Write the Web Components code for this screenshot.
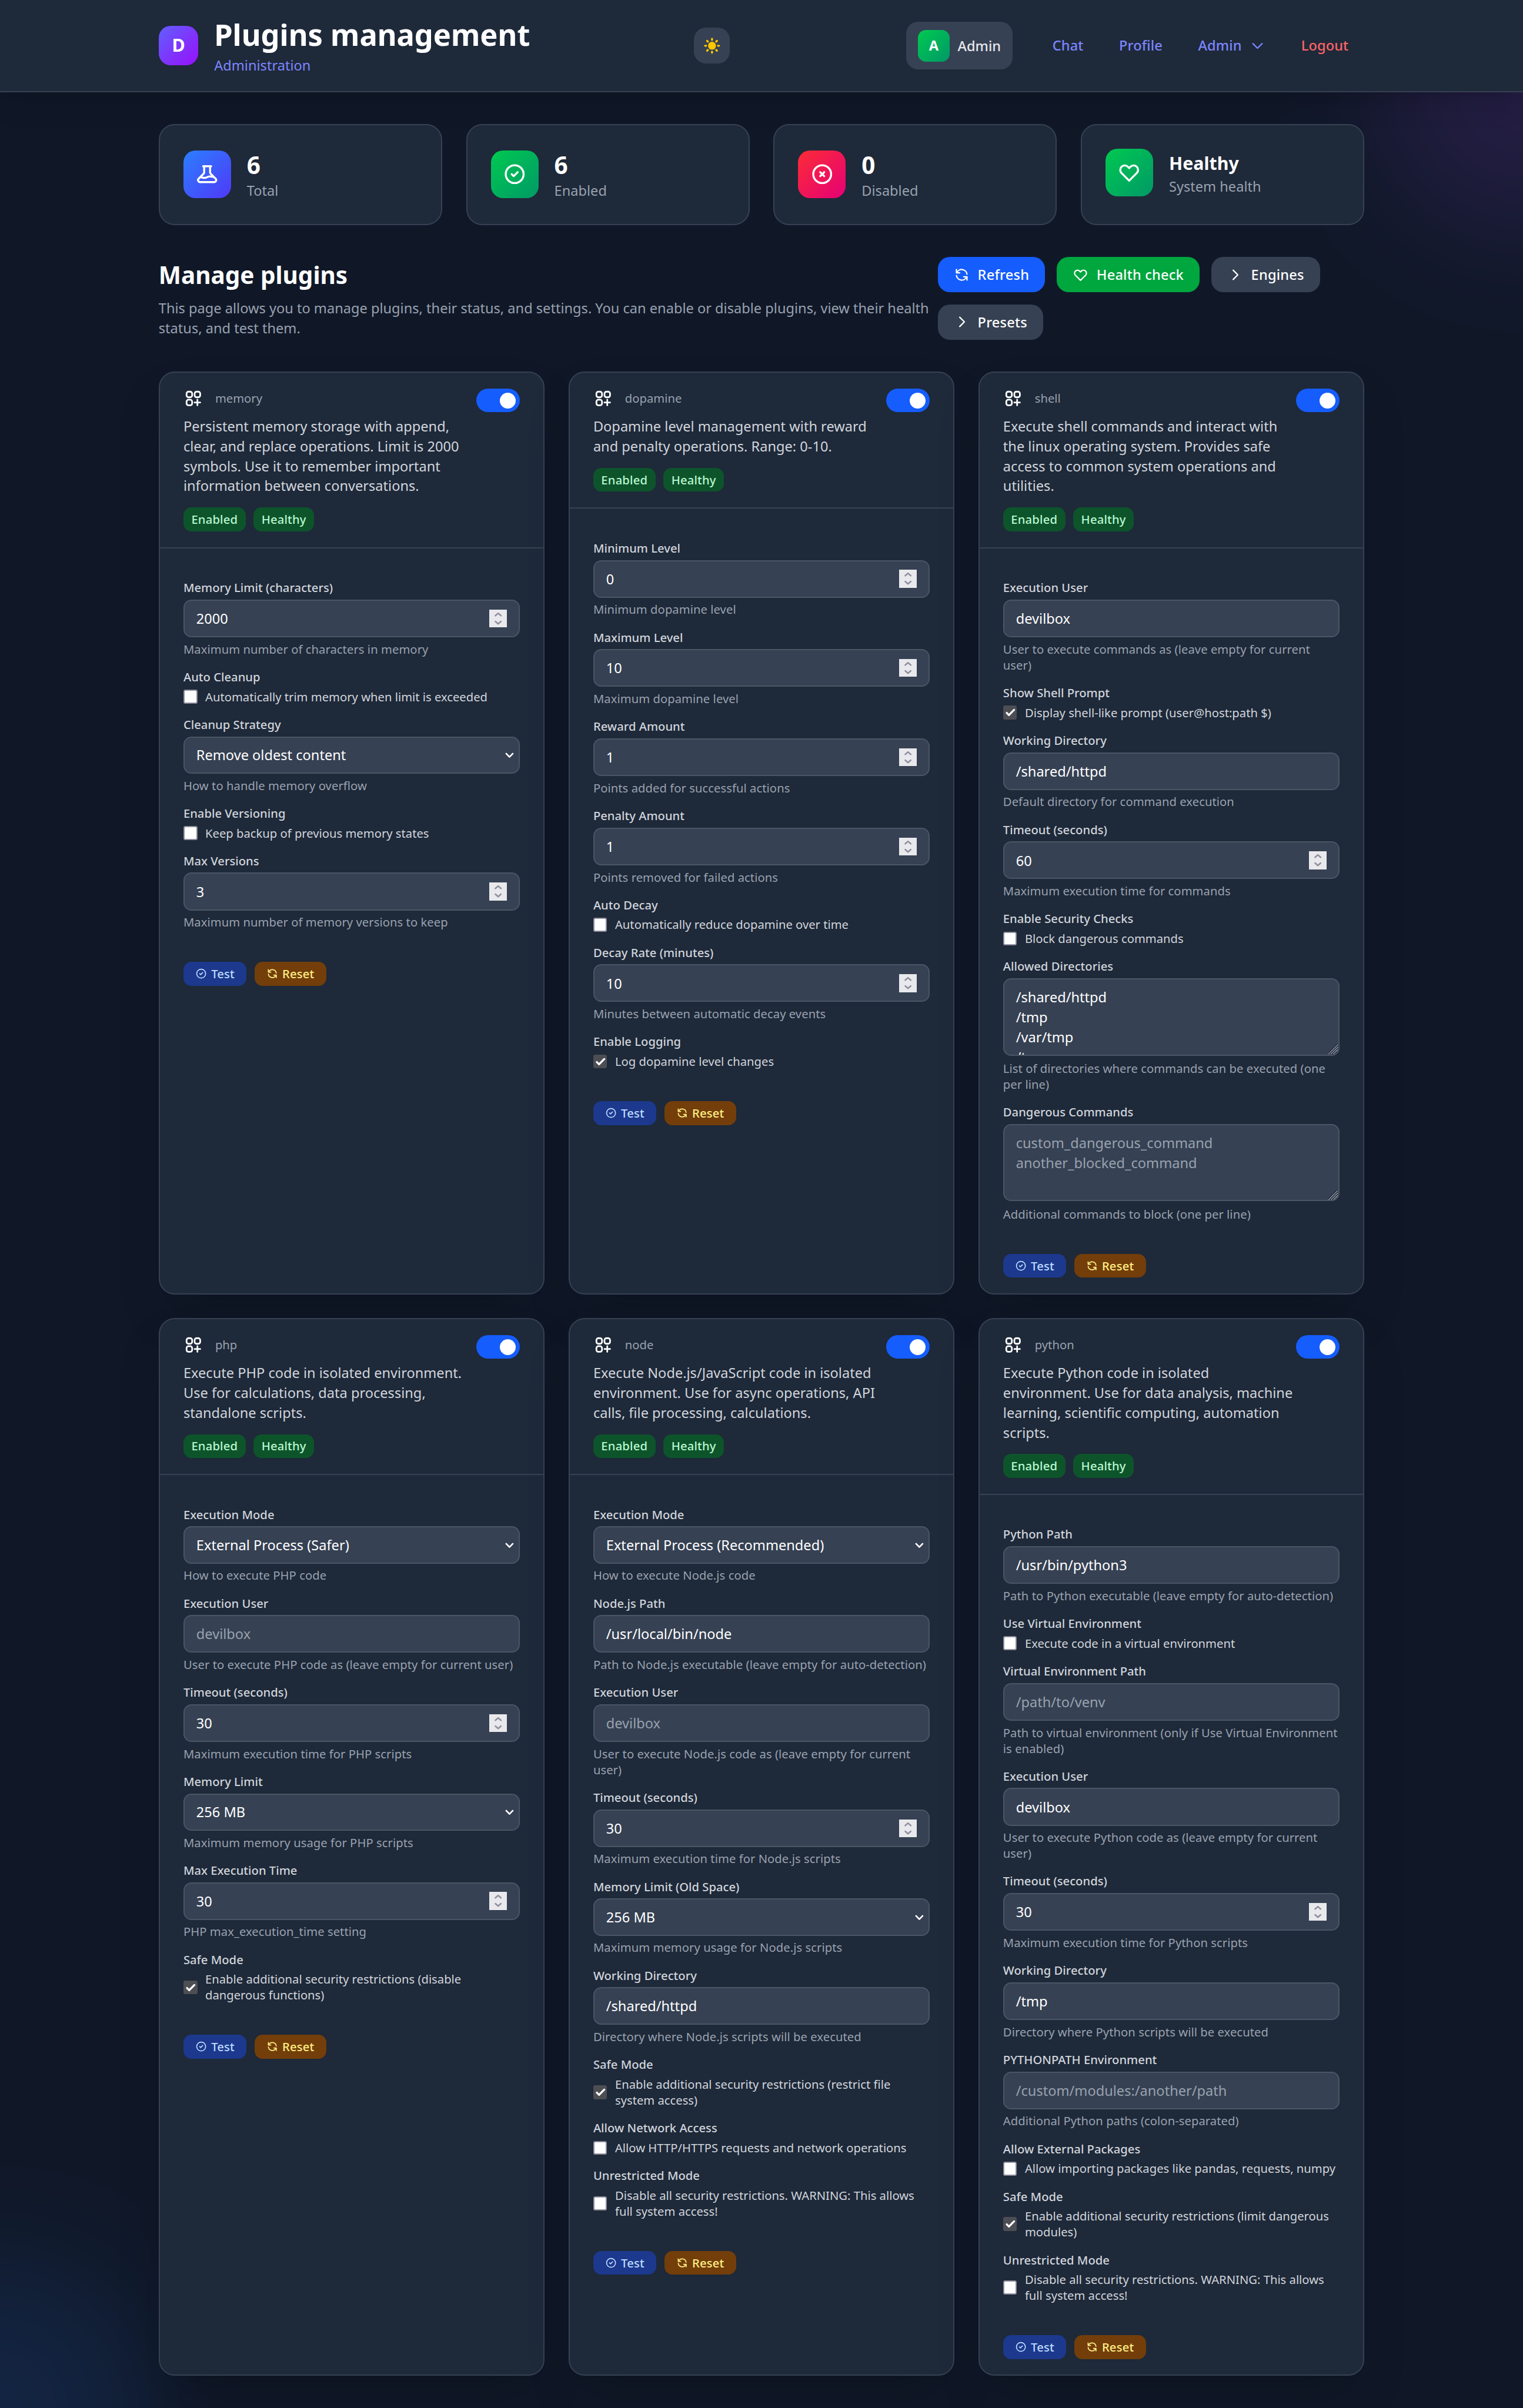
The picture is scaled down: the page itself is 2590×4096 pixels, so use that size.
<!DOCTYPE html>
<html lang="en">
<head>
<meta charset="utf-8">
<title>Plugins management</title>
<style>
html{margin:0;background:#101828}
body{margin:0;zoom:1.686198;width:1536px;height:2429px;overflow:hidden;font-family:"Noto Sans",sans-serif;font-size:16px;line-height:24px;color:#fff;background:#101828}
</style>
</head>
<body>
<plugins-page>
  <page-header slot="header" heading="Plugins management" subtitle="Administration" logo="D" user="Admin" initial="A">
    <nav-link>Chat</nav-link>
    <nav-link>Profile</nav-link>
    <nav-link menu>Admin</nav-link>
    <nav-link danger>Logout</nav-link>
  </page-header>
  <stat-card slot="stats" icon="flask" tone="blue" value="6">Total</stat-card>
  <stat-card slot="stats" icon="check" tone="green" value="6">Enabled</stat-card>
  <stat-card slot="stats" icon="cross" tone="red" value="0">Disabled</stat-card>
  <stat-card slot="stats" icon="heart" tone="green" value="Healthy" compact>System health</stat-card>
  <span slot="heading">Manage plugins</span>
  <span slot="intro">This page allows you to manage plugins, their status, and settings. You can enable or disable plugins, view their health status, and test them.</span>
  <action-button slot="actions" icon="refresh" tone="blue">Refresh</action-button>
  <action-button slot="actions" icon="heart" tone="green">Health check</action-button>
  <action-button slot="actions" icon="right" tone="gray">Engines</action-button>
  <action-button slot="actions" icon="right" tone="gray">Presets</action-button>

  <plugin-card name="memory">
    <span slot="description">Persistent memory storage with append, clear, and replace operations. Limit is 2000 symbols. Use it to remember important information between conversations.</span>
    <form-field type="number" label="Memory Limit (characters)" value="2000" help="Maximum number of characters in memory"></form-field>
    <form-field type="checkbox" label="Auto Cleanup" value="Automatically trim memory when limit is exceeded"></form-field>
    <form-field type="select" label="Cleanup Strategy" value="Remove oldest content" help="How to handle memory overflow"></form-field>
    <form-field type="checkbox" label="Enable Versioning" value="Keep backup of previous memory states"></form-field>
    <form-field type="number" label="Max Versions" value="3" help="Maximum number of memory versions to keep"></form-field>
  </plugin-card>

  <plugin-card name="dopamine">
    <span slot="description">Dopamine level management with reward and penalty operations. Range: 0-10.</span>
    <form-field type="number" label="Minimum Level" value="0" help="Minimum dopamine level"></form-field>
    <form-field type="number" label="Maximum Level" value="10" help="Maximum dopamine level"></form-field>
    <form-field type="number" label="Reward Amount" value="1" help="Points added for successful actions"></form-field>
    <form-field type="number" label="Penalty Amount" value="1" help="Points removed for failed actions"></form-field>
    <form-field type="checkbox" label="Auto Decay" value="Automatically reduce dopamine over time"></form-field>
    <form-field type="number" label="Decay Rate (minutes)" value="10" help="Minutes between automatic decay events"></form-field>
    <form-field type="checkbox" checked label="Enable Logging" value="Log dopamine level changes"></form-field>
  </plugin-card>

  <plugin-card name="shell">
    <span slot="description">Execute shell commands and interact with the linux operating system. Provides safe access to common system operations and utilities.</span>
    <form-field type="text" label="Execution User" value="devilbox" help="User to execute commands as (leave empty for current user)"></form-field>
    <form-field type="checkbox" checked label="Show Shell Prompt" value="Display shell-like prompt (user@host:path $)"></form-field>
    <form-field type="text" label="Working Directory" value="/shared/httpd" help="Default directory for command execution"></form-field>
    <form-field type="number" label="Timeout (seconds)" value="60" help="Maximum execution time for commands"></form-field>
    <form-field type="checkbox" label="Enable Security Checks" value="Block dangerous commands"></form-field>
    <form-field type="textarea" label="Allowed Directories" value="/shared/httpd&#10;/tmp&#10;/var/tmp&#10;/tmp" help="List of directories where commands can be executed (one per line)"></form-field>
    <form-field type="textarea" placeholder label="Dangerous Commands" value="custom_dangerous_command&#10;another_blocked_command" help="Additional commands to block (one per line)"></form-field>
  </plugin-card>

  <plugin-card name="php">
    <span slot="description">Execute PHP code in isolated environment. Use for calculations, data processing, standalone scripts.</span>
    <form-field type="select" label="Execution Mode" value="External Process (Safer)" help="How to execute PHP code"></form-field>
    <form-field type="text" placeholder label="Execution User" value="devilbox" help="User to execute PHP code as (leave empty for current user)"></form-field>
    <form-field type="number" label="Timeout (seconds)" value="30" help="Maximum execution time for PHP scripts"></form-field>
    <form-field type="select" label="Memory Limit" value="256 MB" help="Maximum memory usage for PHP scripts"></form-field>
    <form-field type="number" label="Max Execution Time" value="30" help="PHP max_execution_time setting"></form-field>
    <form-field type="checkbox" checked label="Safe Mode" value="Enable additional security restrictions (disable dangerous functions)"></form-field>
  </plugin-card>

  <plugin-card name="node">
    <span slot="description">Execute Node.js/JavaScript code in isolated environment. Use for async operations, API calls, file processing, calculations.</span>
    <form-field type="select" label="Execution Mode" value="External Process (Recommended)" help="How to execute Node.js code"></form-field>
    <form-field type="text" label="Node.js Path" value="/usr/local/bin/node" help="Path to Node.js executable (leave empty for auto-detection)"></form-field>
    <form-field type="text" placeholder label="Execution User" value="devilbox" help="User to execute Node.js code as (leave empty for current user)"></form-field>
    <form-field type="number" label="Timeout (seconds)" value="30" help="Maximum execution time for Node.js scripts"></form-field>
    <form-field type="select" label="Memory Limit (Old Space)" value="256 MB" help="Maximum memory usage for Node.js scripts"></form-field>
    <form-field type="text" label="Working Directory" value="/shared/httpd" help="Directory where Node.js scripts will be executed"></form-field>
    <form-field type="checkbox" checked label="Safe Mode" value="Enable additional security restrictions (restrict file system access)"></form-field>
    <form-field type="checkbox" label="Allow Network Access" value="Allow HTTP/HTTPS requests and network operations"></form-field>
    <form-field type="checkbox" label="Unrestricted Mode" value="Disable all security restrictions. WARNING: This allows full system access!"></form-field>
  </plugin-card>

  <plugin-card name="python">
    <span slot="description">Execute Python code in isolated environment. Use for data analysis, machine learning, scientific computing, automation scripts.</span>
    <form-field type="text" label="Python Path" value="/usr/bin/python3" help="Path to Python executable (leave empty for auto-detection)"></form-field>
    <form-field type="checkbox" label="Use Virtual Environment" value="Execute code in a virtual environment"></form-field>
    <form-field type="text" placeholder label="Virtual Environment Path" value="/path/to/venv" help="Path to virtual environment (only if Use Virtual Environment is enabled)"></form-field>
    <form-field type="text" label="Execution User" value="devilbox" help="User to execute Python code as (leave empty for current user)"></form-field>
    <form-field type="number" label="Timeout (seconds)" value="30" help="Maximum execution time for Python scripts"></form-field>
    <form-field type="text" label="Working Directory" value="/tmp" help="Directory where Python scripts will be executed"></form-field>
    <form-field type="text" placeholder label="PYTHONPATH Environment" value="/custom/modules:/another/path" help="Additional Python paths (colon-separated)"></form-field>
    <form-field type="checkbox" label="Allow External Packages" value="Allow importing packages like pandas, requests, numpy"></form-field>
    <form-field type="checkbox" checked label="Safe Mode" value="Enable additional security restrictions (limit dangerous modules)"></form-field>
    <form-field type="checkbox" label="Unrestricted Mode" value="Disable all security restrictions. WARNING: This allows full system access!"></form-field>
  </plugin-card>
</plugins-page>

<script>
const define = (name, render) => customElements.define(name, class extends HTMLElement {
  connectedCallback() {
    if (this.shadowRoot) return;
    this.attachShadow({ mode: 'open' }).innerHTML = '<style>*{box-sizing:border-box}</style>' + render(this);
  }
});
const esc = s => (s || '').replace(/&/g, '&amp;').replace(/</g, '&lt;');

const ICONS = {
  flask: 'M19.428 15.428a2 2 0 00-1.022-.547l-2.387-.477a6 6 0 00-3.86.517l-.318.158a6 6 0 01-3.86.517L6.05 15.21a2 2 0 00-1.806.547M8 4h8l-1 1v5.172a2 2 0 00.586 1.414l5 5c1.26 1.26.367 3.414-1.415 3.414H4.828c-1.782 0-2.674-2.154-1.414-3.414l5-5A2 2 0 009 10.172V5L8 4z',
  check: 'M9 12l2 2 4-4m6 2a9 9 0 11-18 0 9 9 0 0118 0z',
  cross: 'M10 14l2-2m0 0l2-2m-2 2l-2-2m2 2l2 2m7-2a9 9 0 11-18 0 9 9 0 0118 0z',
  heart: 'M4.318 6.318a4.5 4.5 0 000 6.364L12 20.364l7.682-7.682a4.5 4.5 0 00-6.364-6.364L12 7.636l-1.318-1.318a4.5 4.5 0 00-6.364 0z',
  refresh: 'M4 4v5h.582m15.356 2A8.001 8.001 0 004.582 9m0 0H9m11 11v-5h-.581m0 0a8.003 8.003 0 01-15.357-2m15.357 2H15',
  right: 'M9 5l7 7-7 7',
  down: 'M19 9l-7 7-7-7',
  plugin: 'M13.5 16.875h3.375m0 0h3.375m-3.375 0V13.5m0 3.375v3.375M6 10.5h2.25a2.25 2.25 0 002.25-2.25V6a2.25 2.25 0 00-2.25-2.25H6A2.25 2.25 0 003.75 6v2.25A2.25 2.25 0 006 10.5zm0 9.75h2.25A2.25 2.25 0 0010.5 18v-2.25a2.25 2.25 0 00-2.25-2.25H6a2.25 2.25 0 00-2.25 2.25V18A2.25 2.25 0 006 20.25zm9.75-9.75H18a2.25 2.25 0 002.25-2.25V6A2.25 2.25 0 0018 3.75h-2.25A2.25 2.25 0 0013.5 6v2.25a2.25 2.25 0 002.25 2.25z'
};

define('ui-icon', el => {
  const size = el.getAttribute('size') || 24;
  return `<style>:host{display:block;flex:none;width:${size}px;height:${size}px}svg{display:block;width:100%;height:100%}</style>
  <svg viewBox="0 0 24 24" fill="none" stroke="currentColor" stroke-width="2" stroke-linecap="round" stroke-linejoin="round"><path d="${ICONS[el.getAttribute('name')]}"/></svg>`;
});

define('nav-link', el => `<style>
  :host{display:flex;align-items:center;gap:8px;padding:8px 16px;font-size:14px;line-height:20px;font-weight:500;letter-spacing:.06px;color:#7c86ff}
  :host([danger]){color:#ff6467}
  </style><slot></slot>${el.hasAttribute('menu') ? '<ui-icon name="down" size="16"></ui-icon>' : ''}`);

define('page-header', el => `<style>
  :host{display:block;position:relative;background:#1e2939;border-bottom:1.2px solid #364153;box-shadow:0 20px 25px -5px rgb(0 0 0/.1),0 8px 10px -6px rgb(0 0 0/.1)}
  .bar{width:1216px;height:92px;margin:0 auto;display:flex;align-items:center}
  .brand{display:flex;align-items:center;gap:16px;width:540px}
  .logo{width:40px;height:40px;border-radius:12px;background:linear-gradient(135deg,#615fff,#9810fa);display:flex;align-items:center;justify-content:center;font-size:18px;font-weight:700}
  h1{margin:0;padding-top:1.6px;font-size:30px;line-height:36px;font-weight:700}
  p{margin:3.4px 0 0;font-size:14px;line-height:20px;color:#7c86ff}
  .theme{width:36px;height:36px;border-radius:12px;background:#364153;color:#fdc700;display:flex;align-items:center;justify-content:center}
  .theme svg{width:20px;height:20px}
  nav{margin-left:auto;display:flex;align-items:center;gap:4px}
  .user{display:flex;align-items:center;gap:8px;height:48px;padding:0 12px;margin-right:20px;border-radius:12px;background:#364153;font-size:14px;font-weight:500;color:#e5e7eb}
  .user span{padding-top:.8px}
  .avatar{width:32px;height:32px;border-radius:8px;background:linear-gradient(135deg,#00c951,#009966);color:#fff;font-weight:700;display:flex;align-items:center;justify-content:center}
  </style>
  <div class="bar">
    <div class="brand"><div class="logo">${el.getAttribute('logo')}</div><div><h1>${el.getAttribute('heading')}</h1><p>${el.getAttribute('subtitle')}</p></div></div>
    <div class="theme"><svg viewBox="0 0 20 20" fill="currentColor"><path fill-rule="evenodd" clip-rule="evenodd" d="M10 2a1 1 0 011 1v1a1 1 0 11-2 0V3a1 1 0 011-1zm4 8a4 4 0 11-8 0 4 4 0 018 0zm-.464 4.95l.707.707a1 1 0 001.414-1.414l-.707-.707a1 1 0 00-1.414 1.414zm2.12-10.607a1 1 0 010 1.414l-.706.707a1 1 0 11-1.414-1.414l.707-.707a1 1 0 011.414 0zM17 11a1 1 0 100-2h-1a1 1 0 100 2h1zm-7 4a1 1 0 011 1v1a1 1 0 11-2 0v-1a1 1 0 011-1zM5.05 6.464A1 1 0 106.465 5.05l-.708-.707a1 1 0 00-1.414 1.414l.707.707zm1.414 8.486l-.707.707a1 1 0 01-1.414-1.414l.707-.707a1 1 0 011.414 1.414zM4 11a1 1 0 100-2H3a1 1 0 000 2h1z"/></svg></div>
    <nav><div class="user"><div class="avatar">${el.getAttribute('initial')}</div><span>${el.getAttribute('user')}</span></div><slot></slot></nav>
  </div>`);

define('stat-card', el => `<style>
  :host{display:flex;align-items:flex-start;gap:16px;height:102px;padding:23.8px;border:1.2px solid #364153;border-radius:16px;background:#1e2939;box-sizing:border-box}
  .tile{width:48px;height:48px;margin-top:2px;border-radius:12px;display:flex;align-items:center;justify-content:center}
  :host([compact]) .tile{margin-top:0}
  .blue{background:linear-gradient(135deg,#2b7fff,#4f39f6)}
  .green{background:linear-gradient(135deg,#00c951,#009966)}
  .red{background:linear-gradient(135deg,#fb2c36,#e60076)}
  .value{padding-top:.6px;font-size:24px;line-height:32px;font-weight:700}
  :host([compact]) .value{font-size:18px;line-height:28px}
  .label{font-size:14px;line-height:20px;color:#99a1af}
  </style>
  <div class="tile ${el.getAttribute('tone')}"><ui-icon name="${el.getAttribute('icon')}"></ui-icon></div>
  <div><div class="value">${el.getAttribute('value')}</div><div class="label"><slot></slot></div></div>`);

define('action-button', el => `<style>
  :host{display:flex;align-items:center;gap:8px;height:36px;padding:0 16px;border-radius:12px;font-size:14px;line-height:20px;font-weight:500;letter-spacing:.12px;box-sizing:border-box}
  :host([tone=blue]){background:#155dfc}
  :host([tone=green]){background:#00a63e}
  :host([tone=gray]){background:#364153}
  :host([small]){height:24px;padding:0 12px;gap:4px;border-radius:8px;font-size:12px;line-height:16px}
  :host([tone=test]){background:#1c398e;color:#bedbff}
  :host([tone=reset]){background:#733e0a;color:#fff085}
  span{padding-top:.6px}
  </style><ui-icon name="${el.getAttribute('icon')}" size="${el.hasAttribute('small') ? 12 : 16}"></ui-icon><span><slot></slot></span>`);

define('status-badge', () => `<style>
  :host{display:block;height:24px;padding:4px 8px;border-radius:8px;background:#0d542b;color:#b9f8cf;font-size:12px;line-height:16px;font-weight:500;letter-spacing:.1px;box-sizing:border-box}
  </style><slot></slot>`);

define('toggle-switch', () => `<style>
  :host{display:flex;align-items:center;justify-content:flex-end;flex:none;width:44px;height:24px;padding:4px;border-radius:12px;background:#155dfc;box-sizing:border-box}
  i{width:16px;height:16px;border-radius:50%;background:#fff}
  </style><i></i>`);

const CONTROL = {
  text: v => `<div class="box">${v}</div>`,
  number: v => `<div class="box"><span>${v}</span><svg class="spin" viewBox="0 0 18 18" fill="none" stroke="#8f8f9d" stroke-width="1.5" stroke-linecap="round" stroke-linejoin="round"><path d="M6.2 6.1L9 3.6l2.8 2.5M6.2 11.9L9 14.4l2.8-2.5"/></svg></div>`,
  select: v => `<div class="box select"><span>${v}</span><svg class="arrow" viewBox="0 0 10 6" fill="none" stroke="#fff" stroke-width="1.6" stroke-linecap="round" stroke-linejoin="round"><path d="M1.7 1.1L5 4.5l3.3-3.4"/></svg></div>`,
  textarea: v => `<div class="box area">${v}<svg class="grip" viewBox="0 0 10 10" fill="none"><path d="M-.4 9.9L9.9-.4M2.1 9.9l7.8-7.8M4.6 9.9l5.3-5.3M7.1 9.9l2.8-2.8" stroke="#1b2433" stroke-width=".7"/><path d="M.6 10.1L10.1.6M3.1 10.1l7-7M5.6 10.1l4.5-4.5M8.1 10.1l2-2" stroke="#b4b8bf" stroke-width=".6"/></svg></div>`
};
define('form-field', el => {
  const type = el.getAttribute('type'), value = esc(el.getAttribute('value'));
  const body = type === 'checkbox'
    ? `<div class="row"><i class="tick">${el.hasAttribute('checked') ? '<svg viewBox="0 0 14 14" fill="none" stroke="#fff" stroke-width="2" stroke-linecap="round" stroke-linejoin="round"><path d="M3.6 7.5L5.8 9.7 11 4.4"/></svg>' : ''}</i><span>${value}</span></div>`
    : CONTROL[type](value) + `<div class="help">${esc(el.getAttribute('help'))}</div>`;
  return `<style>
  :host{display:block;font-size:12px;line-height:16px}
  .label{font-weight:500;color:#d1d5dc;margin-bottom:4px}
  .box{height:38px;padding:1.2px 11.8px 0;display:flex;align-items:center;justify-content:space-between;border:1.2px solid #4a5565;border-radius:8px;background:#364153;font-size:14px;line-height:20px;color:#fff}
  :host([placeholder]) .box{color:#99a1af}
  .select{height:37.5px;padding-right:4.5px}
  .area{position:relative;display:block;height:78px;padding:8.5px 11.8px 0;white-space:pre;overflow:hidden;margin-bottom:5px}
  .grip{position:absolute;right:.5px;bottom:.5px;width:10px;height:10px}
  .spin{width:18px;height:18px;margin-top:-1.2px;background:#e9e9ed}
  .arrow{width:10px;height:6px}
  .help{margin-top:4px;color:#99a1af;letter-spacing:.03px}
  .area + .help{margin-top:0}
  .row{display:flex;align-items:center;gap:8px;color:#d1d5dc}
  .tick{flex:none;width:14px;height:14px;border:1.2px solid #8f8f9d;border-radius:2px;background:#fff}
  :host([checked]) .tick{border:0;background:#4d4e53}
  .tick svg{display:block;width:14px;height:14px}
  </style><div class="label">${esc(el.getAttribute('label'))}</div>${body}`;
});

define('plugin-card', el => `<style>
  :host{display:block;border:1.2px solid #364153;border-radius:16px;background:#1e2939;box-shadow:0 25px 50px -12px rgb(0 0 0/.25);box-sizing:border-box}
  header{display:flex;align-items:flex-start;justify-content:space-between;padding:15.8px 23.8px 16px;border-bottom:1.2px solid #364153}
  .title{display:flex;align-items:center;gap:12px;height:20px;font-size:12px;line-height:16px;color:#99a1af}
  .title ui-icon{color:#fff}
  .desc{margin-top:8.7px;font-size:14px;line-height:20px;color:#d1d5dc}
  .row{display:flex;gap:8px}
  .badges{margin-top:11.3px}
  .fields{display:flex;flex-direction:column;gap:12px;padding:31.8px 23.8px 32px}
  .buttons{padding:0 23.8px 15.8px}
  </style>
  <header><div><div class="title"><ui-icon name="plugin" size="20"></ui-icon><span>${el.getAttribute('name')}</span></div>
  <div class="desc"><slot name="description"></slot></div>
  <div class="row badges"><status-badge>Enabled</status-badge><status-badge>Healthy</status-badge></div></div><toggle-switch></toggle-switch></header>
  <div class="fields"><slot></slot></div>
  <div class="row buttons"><action-button small icon="check" tone="test">Test</action-button><action-button small icon="refresh" tone="reset">Reset</action-button></div>`);

define('plugins-page', () => `<style>
  :host{display:block;position:relative;height:2429px;overflow:hidden}
  .glow{position:absolute;width:288px;height:288px;border-radius:50%;filter:blur(64px);opacity:.125}
  .violet{right:-144px;top:-54px;background:#ad46ff}
  .azure{left:-144px;bottom:-144px;background:#2b7fff}
  main{position:relative;width:1216px;margin:0 auto;padding-top:31.8px}
  .stats{display:grid;grid-template-columns:repeat(4,1fr);gap:24px}
  .intro{display:flex;align-items:center;margin:32px 0}
  .text{flex:1}
  h2{margin:0;padding:1px 0 8px;font-size:24px;line-height:32px;font-weight:700}
  .text p{margin:0;font-size:14px;line-height:20px;color:#99a1af}
  .actions{display:flex;flex-wrap:wrap;gap:12px;width:430px}
  .cards{display:grid;grid-template-columns:repeat(3,1fr);gap:24px}
  </style>
  <div class="glow violet"></div><div class="glow azure"></div>
  <slot name="header"></slot>
  <main>
    <section class="stats"><slot name="stats"></slot></section>
    <section class="intro"><div class="text"><h2><slot name="heading"></slot></h2><p><slot name="intro"></slot></p></div><div class="actions"><slot name="actions"></slot></div></section>
    <section class="cards"><slot></slot></section>
  </main>`);
</script>
</body>
</html>
